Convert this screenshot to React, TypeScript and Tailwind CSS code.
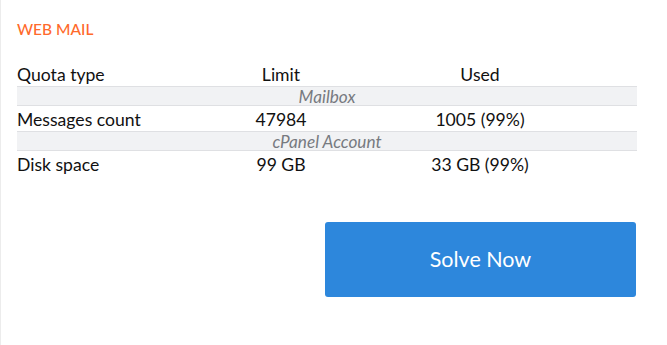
export default function App() {
  const font = { fontFamily: "Lato, 'Open Sans', sans-serif" };
  return (
    <div className="w-[667px] h-[345px] bg-white border-l border-[#ececec] overflow-hidden" style={font}>
      <div className="pl-[16px] pr-[30px] pt-[19px]">
        <div className="text-[15.5px] leading-[20px] text-[#ff6a2b] font-medium">WEB MAIL</div>
        <div className="mt-[25px] text-[17.6px] text-[#111]">
          <div className="grid grid-cols-[222px_84px_1fr] h-[22px] leading-[22px]">
            <div>Quota type</div>
            <div className="text-center">Limit</div>
            <div className="text-center">Used</div>
          </div>
          <div className="h-[20px] leading-[19px] bg-[#f1f2f4] border-y border-[#dfe0e3] text-center italic text-[#777a80] text-[17.2px]">Mailbox</div>
          <div className="grid grid-cols-[222px_84px_1fr] h-[25px] leading-[27px]">
            <div>Messages count</div>
            <div className="text-center">47984</div>
            <div className="text-center">1005 (99%)</div>
          </div>
          <div className="h-[20px] leading-[19px] bg-[#f1f2f4] border-y border-[#dfe0e3] text-center italic text-[#777a80] text-[17.2px]">cPanel Account</div>
          <div className="grid grid-cols-[222px_84px_1fr] h-[27px] leading-[27px]">
            <div>Disk space</div>
            <div className="text-center">99 GB</div>
            <div className="text-center">33 GB (99%)</div>
          </div>
        </div>
        <div className="flex justify-end mt-[44px] pr-[1px]">
          <button className="w-[311px] h-[75px] rounded-[3px] bg-[#2d87dc] text-white text-[21.5px] font-normal">Solve Now</button>
        </div>
      </div>
    </div>
  );
}
